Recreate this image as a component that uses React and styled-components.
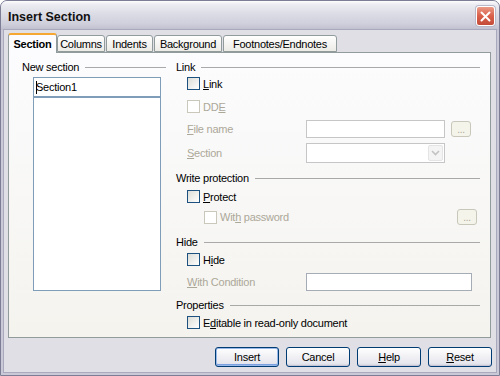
import styled, { createGlobalStyle } from 'styled-components'

const GlobalStyle = createGlobalStyle`
  html, body {
    margin: 0;
    padding: 0;
    background: #ffffff;
  }
  body {
    font-family: "Liberation Sans", Arial, sans-serif;
    font-size: 11px;
    letter-spacing: -0.25px;
    color: #000;
  }
`

const tabs = [
    { label: 'Section', width: 49, active: true },
    { label: 'Columns', width: 48 },
    { label: 'Indents', width: 47 },
    { label: 'Background', width: 68 },
    { label: 'Footnotes/Endnotes', width: 114 },
]

function Mn({ children }) {
    return <u>{children}</u>
}

function Check({ disabled, children }) {
    return (
        <CheckWrap $disabled={disabled}>
            <CheckBox $disabled={disabled} />
            <span>{children}</span>
        </CheckWrap>
    )
}

function GroupHeader({ children }) {
    return (
        <Header>
            <span>{children}</span>
            <HeaderLine />
        </Header>
    )
}

export default function App() {
    return (
        <>
            <GlobalStyle />
            <Window>
                <TitleBar>
                    <Title>Insert Section</Title>
                    <CloseButton>
                        <svg width="11" height="11" viewBox="0 0 11 11">
                            <path d="M1.5 1.5 L9.5 9.5 M9.5 1.5 L1.5 9.5" stroke="#fff" strokeWidth="2" strokeLinecap="round" />
                        </svg>
                    </CloseButton>
                </TitleBar>
                <Body>
                    <Tabs>
                        {tabs.map(t => (
                            <Tab key={t.label} $active={t.active} $w={t.width}>{t.label}</Tab>
                        ))}
                    </Tabs>
                    <Panel>
                        <LeftCol>
                            <GroupHeader>New section</GroupHeader>
                            <NameInput>
                                <Caret />Section1
                            </NameInput>
                            <ListBox />
                        </LeftCol>
                        <RightCol>
                            <GroupHeader>Link</GroupHeader>
                            <Row $mt={2} $h={15}>
                                <Check><Mn>L</Mn>ink</Check>
                            </Row>
                            <Row $mt={8} $h={15}>
                                <Check disabled>DD<Mn>E</Mn></Check>
                            </Row>
                            <Row $mt={6} $h={18}>
                                <FieldLabel $disabled><Mn>F</Mn>ile name</FieldLabel>
                                <TextBox $w={139} $disabled />
                                <DotsButton>...</DotsButton>
                            </Row>
                            <Row $mt={5} $h={20}>
                                <FieldLabel $disabled><Mn>S</Mn>ection</FieldLabel>
                                <Combo>
                                    <ComboArrow>
                                        <svg width="9" height="6" viewBox="0 0 9 6">
                                            <path d="M1 1 L4.5 4.5 L8 1" fill="none" stroke="#c3c3c3" strokeWidth="1.6" />
                                        </svg>
                                    </ComboArrow>
                                </Combo>
                            </Row>
                            <Spacer $mt={8} />
                            <GroupHeader>Write protection</GroupHeader>
                            <Row $mt={4} $h={15}>
                                <Check><Mn>P</Mn>rotect</Check>
                            </Row>
                            <Row $mt={5} $h={16}>
                                <Indent>
                                    <Check disabled>Wit<Mn>h</Mn> password</Check>
                                </Indent>
                                <DotsButton>...</DotsButton>
                            </Row>
                            <Spacer $mt={10} />
                            <GroupHeader>Hide</GroupHeader>
                            <Row $mt={3} $h={15}>
                                <Check>H<Mn>i</Mn>de</Check>
                            </Row>
                            <Row $mt={6} $h={18}>
                                <FieldLabel $disabled><Mn>W</Mn>ith Condition</FieldLabel>
                                <TextBox $w={166} />
                            </Row>
                            <Spacer $mt={7} />
                            <GroupHeader>Properties</GroupHeader>
                            <Row $mt={3} $h={15}>
                                <Check>E<Mn>d</Mn>itable in read-only document</Check>
                            </Row>
                        </RightCol>
                    </Panel>
                    <ButtonRow>
                        <Button $default>Insert</Button>
                        <Button>Cancel</Button>
                        <Button><Mn>H</Mn>elp</Button>
                        <Button><Mn>R</Mn>eset</Button>
                    </ButtonRow>
                </Body>
            </Window>
        </>
    )
}

const Window = styled.div`
    width: 500px;
    height: 376px;
    box-sizing: border-box;
    display: flex;
    flex-direction: column;
    border: 1px solid #7d7e95;
    border-radius: 7px 7px 0 0;
    overflow: hidden;
    background: #c9c9d8;
`

const TitleBar = styled.div`
    height: 29px;
    flex: none;
    display: flex;
    align-items: center;
    justify-content: space-between;
    padding: 0 4px 0 7px;
    background: linear-gradient(#fdfdfe 0%, #ececf2 12%, #dcdce6 45%, #cfcfdc 80%, #bdbdcc 100%);
`

const Title = styled.div`
    font-size: 12.5px;
    font-weight: bold;
    letter-spacing: 0;
    color: #111;
    padding-top: 2px;
`

const CloseButton = styled.div`
    width: 17px;
    height: 18px;
    margin-top: 1px;
    display: flex;
    align-items: center;
    justify-content: center;
    border: 1px solid #fff;
    border-radius: 3px;
    background: linear-gradient(#eb9a86 0%, #d9604a 50%, #c44b38 100%);
    box-shadow: 0 0 0 1px #b8b8c8;
`

const Body = styled.div`
    flex: 1;
    display: flex;
    flex-direction: column;
    margin: 0 3px 3px;
    padding: 3px 5px 0 4px;
    background: #e0dfe6;
    box-shadow: 0 0 0 1px #a9a9bd;
`

const Tabs = styled.div`
    display: flex;
    align-items: flex-end;
    height: 19px;
    position: relative;
    z-index: 1;
`

const Tab = styled.div`
    box-sizing: border-box;
    width: ${p => p.$w}px;
    height: ${p => (p.$active ? 20 : 17)}px;
    margin-bottom: ${p => (p.$active ? -1 : 0)}px;
    display: flex;
    align-items: center;
    justify-content: center;
    border: 1px solid #919b9c;
    border-bottom: ${p => (p.$active ? 'none' : '1px solid #919b9c')};
    border-top: ${p => (p.$active ? '2px solid #f6a732' : '1px solid #919b9c')};
    border-radius: 3px 3px 0 0;
    margin-right: ${p => (p.$active ? 0 : 1)}px;
    font-weight: ${p => (p.$active ? 'bold' : 'normal')};
    background: ${p => (p.$active ? '#fcfcfe' : 'linear-gradient(#ffffff, #ecebe6)')};
`

const Panel = styled.div`
    height: 286px;
    box-sizing: border-box;
    display: grid;
    grid-template-columns: 144px 304px;
    column-gap: 10px;
    align-items: start;
    padding: 7px 10px 0 13px;
    border: 1px solid #919b9c;
    background: linear-gradient(#fcfcfe, #f4f3ee);
`

const LeftCol = styled.div`
    display: flex;
    flex-direction: column;
`

const RightCol = styled.div`
    display: flex;
    flex-direction: column;
`

const Header = styled.div`
    height: 14px;
    display: flex;
    align-items: center;
    gap: 6px;
    white-space: nowrap;
`

const HeaderLine = styled.div`
    flex: 1;
    height: 1px;
    background: #a9a9a9;
`

const NameInput = styled.div`
    margin: 3px 0 0 11px;
    width: 128px;
    height: 20px;
    box-sizing: border-box;
    border: 1px solid #7f9db9;
    background: #fff;
    display: flex;
    align-items: center;
    padding-left: 2px;
    position: relative;
`

const Caret = styled.span`
    position: absolute;
    left: 2px;
    top: 3px;
    width: 1px;
    height: 13px;
    background: #000;
`

const ListBox = styled.div`
    margin-left: 11px;
    width: 128px;
    height: 194px;
    box-sizing: border-box;
    border: 1px solid #7f9db9;
    background: #fff;
`

const Row = styled.div`
    margin-top: ${p => p.$mt}px;
    height: ${p => p.$h}px;
    display: flex;
    align-items: center;
    padding-left: 11px;
`

const Spacer = styled.div`
    height: ${p => p.$mt}px;
`

const Indent = styled.div`
    padding-left: 17px;
    width: 247px;
`

const CheckWrap = styled.label`
    display: flex;
    align-items: center;
    gap: 3px;
    color: ${p => (p.$disabled ? '#aca899' : '#000')};
    white-space: nowrap;
`

const CheckBox = styled.span`
    width: 13px;
    height: 13px;
    box-sizing: border-box;
    border: 1px solid ${p => (p.$disabled ? '#cac8bb' : '#1c5180')};
    background: ${p => (p.$disabled ? '#ffffff' : 'linear-gradient(135deg, #dcdcd7, #ffffff)')};
`

const FieldLabel = styled.span`
    width: 119px;
    color: ${p => (p.$disabled ? '#aca899' : '#000')};
`

const TextBox = styled.div`
    width: ${p => p.$w}px;
    height: 18px;
    box-sizing: border-box;
    border: 1px solid ${p => (p.$disabled ? '#c6c6c6' : '#a5acb5')};
    background: #fff;
`

const DotsButton = styled.div`
    margin-left: 6px;
    width: 20px;
    height: 16px;
    box-sizing: border-box;
    border: 1px solid #c9c7ba;
    border-radius: 3px;
    background: #f5f4ea;
    color: #aca899;
    display: flex;
    align-items: flex-end;
    justify-content: center;
    line-height: 12px;
    font-size: 10px;
`

const Combo = styled.div`
    width: 139px;
    height: 20px;
    box-sizing: border-box;
    border: 1px solid #c6c6c6;
    background: #fff;
    display: flex;
    justify-content: flex-end;
    padding: 1px;
`

const ComboArrow = styled.div`
    width: 15px;
    border-radius: 2px;
    background: #f4f4f4;
    border: 1px solid #e4e4e4;
    box-sizing: border-box;
    display: flex;
    align-items: center;
    justify-content: center;
`

const ButtonRow = styled.div`
    margin: 9px -1px 0 0;
    display: flex;
    justify-content: flex-end;
    gap: 7px;
`

const Button = styled.div`
    width: 64px;
    height: 20px;
    box-sizing: border-box;
    border: 1px solid #003c74;
    border-radius: 3px;
    background: linear-gradient(#ffffff 0%, #f3f3f6 40%, #e6e6ee 85%, #d2d2de 100%);
    box-shadow: ${p => (p.$default ? 'inset 0 0 0 1px #98b8ea, inset 0 -1px 0 1px #7aa0df' : 'inset 0 -1px 0 #c5c5d3')};
    display: flex;
    align-items: center;
    justify-content: center;
`
